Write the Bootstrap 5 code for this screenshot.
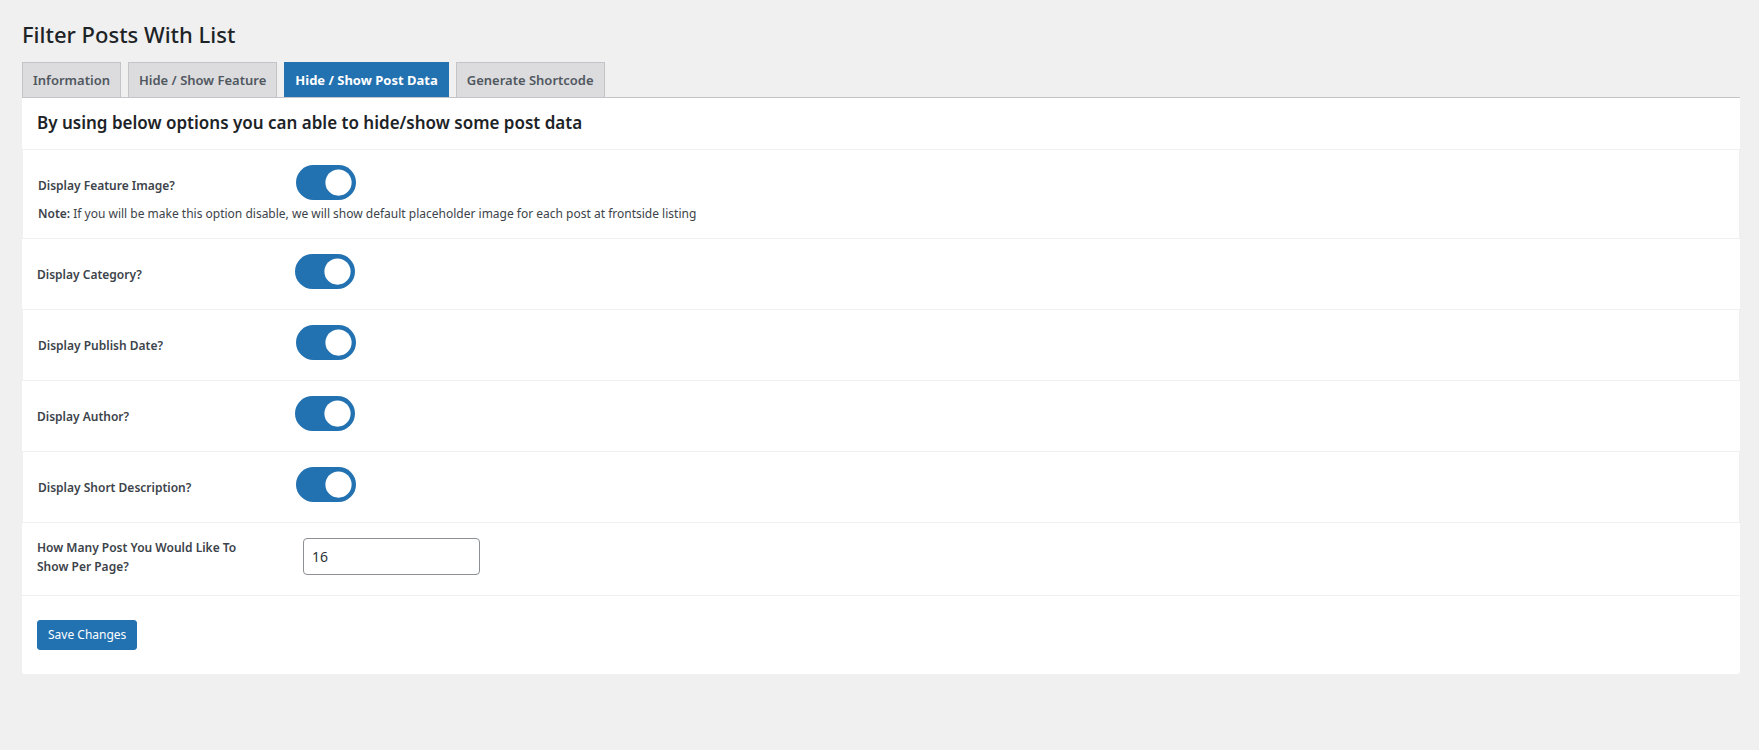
<!DOCTYPE html>
<html lang="en">
<head>
<meta charset="utf-8">
<meta name="viewport" content="width=device-width, initial-scale=1">
<title>Filter Posts With List</title>
<link href="https://cdn.jsdelivr.net/npm/bootstrap@5.3.0/dist/css/bootstrap.min.css" rel="stylesheet">
<style>
  :root { --admin-blue: #2271b1; --admin-line: #f0f0f1; }
  body { background: #f0f0f0; color: #3c434a; font-family: "Segoe UI", "Noto Sans", "Open Sans", sans-serif; font-size: 12px; line-height: 18px; }
  .admin-wrap { padding: 19px 19px 24px 22px; }
  .page-title { font-size: 22px; line-height: 30px; font-weight: 500; color: #1d2327; margin-bottom: 13px; }
  .admin-tabs { border-bottom: 1px solid #c3c4c7; gap: 7px; }
  .admin-tabs .nav-link { background: #dcdcde; border: 1px solid #c3c4c7; border-bottom: 0; border-radius: 0; margin: 0; color: #50575e; font-size: 13px; line-height: 24px; font-weight: 600; padding: 5px 10px; }
  .admin-tabs .nav-link.active { background: var(--admin-blue); border-color: var(--admin-blue); color: #fff; font-weight: 700; }
  .settings-panel { background: #fff; border-radius: 0 0 3px 3px; }
  .panel-title { font-size: 17px; line-height: 23px; font-weight: 600; color: #1d2327; padding: 13px 15px 15px; }
  .option-row { padding: 15px; }
  .option-row:nth-child(odd) { border: 1px solid var(--admin-line); }
  .option-line { min-height: 40px; }
  .option-label { width: 258px; padding-right: 40px; font-weight: 600; line-height: 19px; }
  .form-switch .toggle-input { width: 60px; height: 35px; margin: 0; float: none; display: block; border: 0; border-radius: 35px; background-color: #ccc; }
  .form-switch .toggle-input:checked { background-color: var(--admin-blue); }
  .count-row { padding: 15px 15px 19px; border-bottom: 1px solid var(--admin-line); }
  .count-input { width: 177px; height: 37px; margin-left: 8px; padding: 0 8px; border: 1px solid #8c8f94; border-radius: 4px; font-size: 14px; color: #2c3338; }
  .panel-foot { padding: 24px 15px; }
  .btn-save { background: var(--admin-blue); border: 1px solid var(--admin-blue); border-radius: 3px; color: #fff; font-size: 12px; line-height: 28px; padding: 0 10px; }
  .btn-save:hover { background: #135e96; color: #fff; }
</style>
</head>
<body>
<main class="admin-wrap">
  <h1 class="page-title">Filter Posts With List</h1>
  <nav class="nav admin-tabs">
    <a class="nav-link" href="#information">Information</a>
    <a class="nav-link" href="#feature">Hide / Show Feature</a>
    <a class="nav-link active" aria-current="page" href="#post-data">Hide / Show Post Data</a>
    <a class="nav-link" href="#shortcode">Generate Shortcode</a>
  </nav>
  <form class="settings-panel">
    <h2 class="panel-title mb-0">By using below options you can able to hide/show some post data</h2>
    <div>
      <div class="option-row">
        <div class="option-line d-flex">
          <label class="option-label align-self-center" for="opt-image">Display Feature Image?</label>
          <div class="form-check form-switch p-0 m-0"><input class="form-check-input toggle-input" type="checkbox" role="switch" id="opt-image" checked></div>
        </div>
        <p class="m-0"><strong class="fw-semibold">Note:</strong> If you will be make this option disable, we will show default placeholder image for each post at frontside listing</p>
      </div>
      <div class="option-row">
        <div class="option-line d-flex">
          <label class="option-label align-self-center" for="opt-category">Display Category?</label>
          <div class="form-check form-switch p-0 m-0"><input class="form-check-input toggle-input" type="checkbox" role="switch" id="opt-category" checked></div>
        </div>
      </div>
      <div class="option-row">
        <div class="option-line d-flex">
          <label class="option-label align-self-center" for="opt-date">Display Publish Date?</label>
          <div class="form-check form-switch p-0 m-0"><input class="form-check-input toggle-input" type="checkbox" role="switch" id="opt-date" checked></div>
        </div>
      </div>
      <div class="option-row">
        <div class="option-line d-flex">
          <label class="option-label align-self-center" for="opt-author">Display Author?</label>
          <div class="form-check form-switch p-0 m-0"><input class="form-check-input toggle-input" type="checkbox" role="switch" id="opt-author" checked></div>
        </div>
      </div>
      <div class="option-row">
        <div class="option-line d-flex">
          <label class="option-label align-self-center" for="opt-description">Display Short Description?</label>
          <div class="form-check form-switch p-0 m-0"><input class="form-check-input toggle-input" type="checkbox" role="switch" id="opt-description" checked></div>
        </div>
      </div>
    </div>
    <div class="count-row d-flex align-items-start">
      <label class="option-label" for="opt-count">How Many Post You Would Like To Show Per Page?</label>
      <input class="form-control count-input" type="text" inputmode="numeric" id="opt-count" value="16">
    </div>
    <div class="panel-foot d-flex">
      <button class="btn btn-save" type="submit">Save Changes</button>
    </div>
  </form>
</main>
<script src="https://cdn.jsdelivr.net/npm/bootstrap@5.3.0/dist/js/bootstrap.bundle.min.js"></script>
</body>
</html>
